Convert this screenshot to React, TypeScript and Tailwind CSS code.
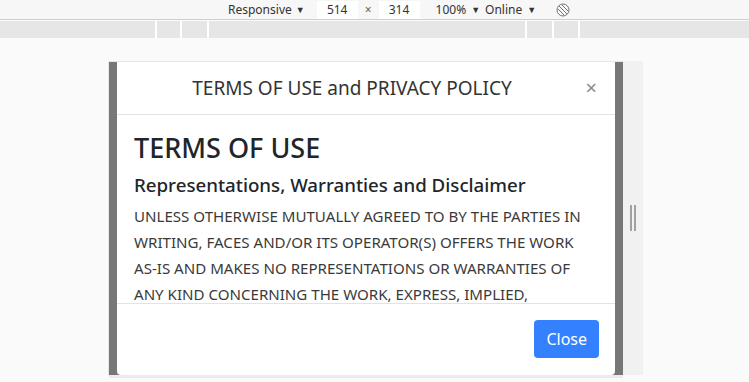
import React from 'react';

const lines = [
    'UNLESS OTHERWISE MUTUALLY AGREED TO BY THE PARTIES IN',
    'WRITING, FACES AND/OR ITS OPERATOR(S) OFFERS THE WORK',
    'AS-IS AND MAKES NO REPRESENTATIONS OR WARRANTIES OF',
    'ANY KIND CONCERNING THE WORK, EXPRESS, IMPLIED,',
];

const RotateIcon = () => (
    <svg width="14" height="14" viewBox="0 0 14 14" fill="none" stroke="#777" strokeWidth="1">
        <circle cx="7" cy="7" r="6" />
        <path d="M3 3 L11 11 M2 6 L8 12 M6 2 L12 8" />
    </svg>
);

const Toolbar = () => (
    <div className="h-[20px] bg-[#f7f7f7] border-b border-[#cfcfcf] flex items-center text-[12px] text-[#333]">
        <div className="w-[228px]" />
        <span>Responsive</span>
        <span className="ml-[4px] text-[9px]">▼</span>
        <div className="ml-[12px] w-[41px] h-[18px] bg-white flex items-center justify-center">514</div>
        <span className="mx-[7px] text-[#666]">×</span>
        <div className="w-[41px] h-[18px] bg-white flex items-center justify-center">314</div>
        <span className="ml-[16px]">100%</span>
        <span className="ml-[5px] text-[9px]">▼</span>
        <span className="ml-[5px]">Online</span>
        <span className="ml-[5px] text-[9px]">▼</span>
        <div className="ml-[20px] flex items-center">
            <RotateIcon />
        </div>
    </div>
);

const Ruler = () => (
    <div className="mt-[1px] h-[17px] bg-[#e6e6e6] flex">
        <div className="w-[155px]" />
        <div className="w-[2px] bg-white" />
        <div className="w-[23px]" />
        <div className="w-[2px] bg-white" />
        <div className="w-[25px]" />
        <div className="w-[2px] bg-white" />
        <div className="w-[316px]" />
        <div className="w-[2px] bg-white" />
        <div className="w-[25px]" />
        <div className="w-[2px] bg-white" />
        <div className="w-[24px]" />
        <div className="w-[2px] bg-white" />
    </div>
);

const Modal = () => (
    <div className="ml-[8px] w-[498px] h-[313px] bg-white rounded-b-[4px] flex flex-col overflow-hidden">
        <div className="h-[53px] shrink-0 border-b border-[#e3e3e3] flex items-center pl-[16px] pr-[18px]">
            <h5 className="flex-1 text-center text-[19px] text-[#333] font-normal">
                TERMS OF USE and PRIVACY POLICY
            </h5>
            <button className="w-[26px] text-[20px] leading-none text-[#8a8a8a] text-right">×</button>
        </div>
        <div className="flex-1 overflow-hidden px-[17px] pt-[16px]">
            <h2 className="text-[27px] leading-[34px] font-medium text-[#212529] mb-[8px]">TERMS OF USE</h2>
            <h4 className="text-[18.7px] leading-[24px] font-medium text-[#212529] mb-[6px]">
                Representations, Warranties and Disclaimer
            </h4>
            <p className="text-[15.1px] leading-[26px] text-[#3a3a3a]">
                {lines.map((l) => (
                    <span key={l} className="block whitespace-nowrap">{l}</span>
                ))}
            </p>
        </div>
        <div className="h-[72px] shrink-0 border-t border-[#e3e3e3] flex items-center justify-end px-[16px]">
            <button className="h-[38px] mb-[1px] px-[12px] rounded-[4px] bg-[#3381ff] text-white text-[16px]">Close</button>
        </div>
    </div>
);

export default function App() {
    return (
        <div
            className="w-[749px] h-[382px] overflow-hidden bg-[#fafafa] flex flex-col"
            style={{ fontFamily: '"Noto Sans", "Open Sans", sans-serif' }}
        >
            <Toolbar />
            <Ruler />
            <div className="flex-1 flex pt-[23px] pl-[108px]">
                <div className="flex flex-col">
                    <div className="flex">
                        <div className="w-[1px] bg-[#e8e8e8]" />
                        <div className="w-[514px] h-[314px] bg-[#777] border-t border-[#e6e6e6]">
                            <Modal />
                        </div>
                        <div className="w-[20px] bg-[#f1f1f1] flex items-center justify-center gap-[2px]">
                            <div className="w-[2px] h-[26px] bg-[#a0a0a0]" />
                            <div className="w-[2px] h-[26px] bg-[#a0a0a0]" />
                        </div>
                    </div>
                    <div className="h-[3px] bg-[#ececec] ml-[1px] w-[514px]" />
                </div>
            </div>
        </div>
    );
}
